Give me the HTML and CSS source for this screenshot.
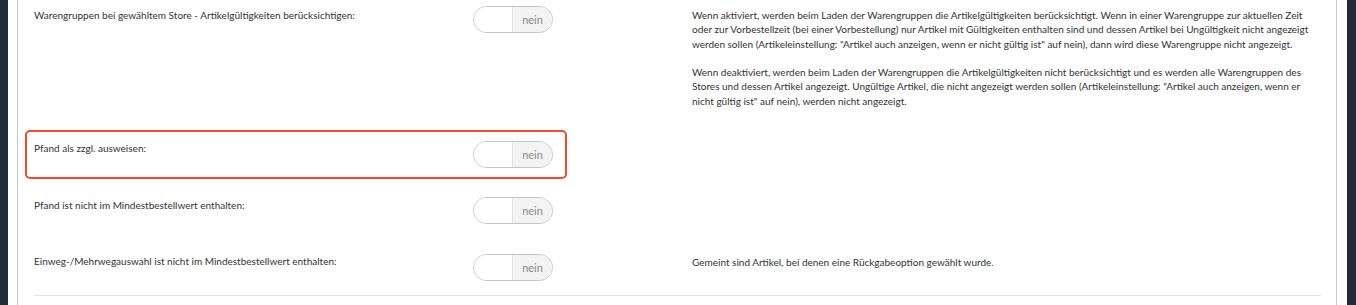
FILE: index.html
```html
<!DOCTYPE html>
<html lang="de">
<head>
<meta charset="utf-8">
<title>Einstellungen</title>
<link rel="stylesheet" href="styles.css">
</head>
<body>
<div class="frame">
  <div class="panel">
    <div class="row row-first">
      <div class="main">
        <div class="label">Warengruppen bei gewähltem Store - Artikelgültigkeiten berücksichtigen:</div>
        <div class="toggle"><span class="knob"></span><span class="state">nein</span></div>
      </div>
      <div class="desc">
        <p>Wenn aktiviert, werden beim Laden der Warengruppen die Artikelgültigkeiten berücksichtigt. Wenn in einer Warengruppe zur aktuellen Zeit oder zur Vorbestellzeit (bei einer Vorbestellung) nur Artikel mit Gültigkeiten enthalten sind und dessen Artikel bei Ungültigkeit nicht angezeigt werden sollen (Artikeleinstellung: "Artikel auch anzeigen, wenn er nicht gültig ist" auf nein), dann wird diese Warengruppe nicht angezeigt.</p>
        <p>Wenn deaktiviert, werden beim Laden der Warengruppen die Artikelgültigkeiten nicht berücksichtigt und es werden alle Warengruppen des Stores und dessen Artikel angezeigt. Ungültige Artikel, die nicht angezeigt werden sollen (Artikeleinstellung: "Artikel auch anzeigen, wenn er nicht gültig ist" auf nein), werden nicht angezeigt.</p>
      </div>
    </div>
    <div class="row">
      <div class="main highlight">
        <div class="label">Pfand als zzgl. ausweisen:</div>
        <div class="toggle"><span class="knob"></span><span class="state">nein</span></div>
      </div>
      <div class="desc"></div>
    </div>
    <div class="row">
      <div class="main">
        <div class="label">Pfand ist nicht im Mindestbestellwert enthalten:</div>
        <div class="toggle"><span class="knob"></span><span class="state">nein</span></div>
      </div>
      <div class="desc"></div>
    </div>
    <div class="row row-last">
      <div class="main">
        <div class="label">Einweg-/Mehrwegauswahl ist nicht im Mindestbestellwert enthalten:</div>
        <div class="toggle"><span class="knob"></span><span class="state">nein</span></div>
      </div>
      <div class="desc"><p>Gemeint sind Artikel, bei denen eine Rückgabeoption gewählt wurde.</p></div>
    </div>
    <div class="rest"></div>
  </div>
</div>
</body>
</html>
```

FILE: styles.css
```css
html, body {
  margin: 0;
  padding: 0;
  height: 305px;
  overflow: hidden;
}
body {
  background: #232a38;
  font-family: Lato, "Open Sans", sans-serif;
  font-size: 10px;
  color: #333333;
}
.frame {
  margin: 0 9px 0 8px;
  height: 305px;
  background: #ffffff;
  padding: 0 10px 0 9px;
}
.panel {
  height: 305px;
  border-left: 1px solid #c9c9c9;
  border-right: 1px solid #c9c9c9;
  padding: 0 15px 0 16px;
  background: #ffffff;
}
.row {
  display: flex;
  align-items: flex-start;
  padding: 15px 0 14.5px;
}
.row-first {
  padding-top: 6px;
  padding-bottom: 17.5px;
}
.row-last {
  border-bottom: 1px solid #e4e4e4;
}
.main {
  width: 519px;
  display: flex;
  justify-content: space-between;
  align-items: flex-start;
  position: relative;
}
.highlight::after {
  content: "";
  position: absolute;
  top: -11px;
  bottom: -11px;
  left: -9px;
  right: -14px;
  border: 2.5px solid #f44b2b;
  border-radius: 5px;
  pointer-events: none;
}
.label {
  line-height: 14.5px;
  padding-top: 0.5px;
}
.row-first .label {
  padding-top: 2px;
}
.toggle {
  width: 80px;
  height: 27px;
  box-sizing: border-box;
  border: 1px solid #c6c6c6;
  border-radius: 13.5px;
  display: flex;
  overflow: hidden;
  background: #ffffff;
}
.knob {
  width: 38px;
  background: #ffffff;
}
.state {
  flex: 1;
  background: #f3f3f3;
  border-left: 1px solid #e2e2e2;
  color: #8a8a8a;
  font-size: 11px;
  display: flex;
  align-items: center;
  justify-content: center;
}
.desc {
  flex: 1;
  margin-left: 139px;
  line-height: 14.5px;
  padding-top: 1.5px;
}
.desc p {
  margin: 0 0 13.5px;
}
.desc p:last-child {
  margin-bottom: 0;
}
```
